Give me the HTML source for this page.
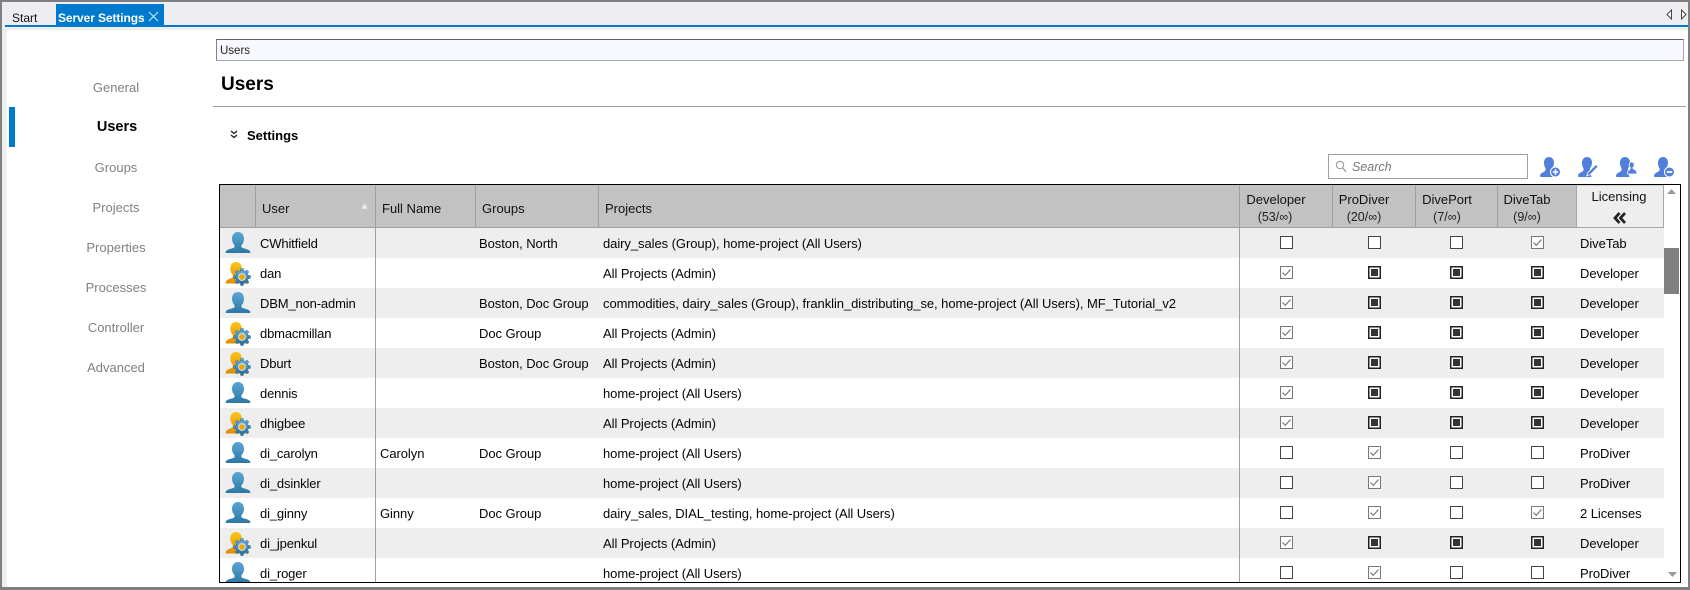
<!DOCTYPE html>
<html><head><meta charset="utf-8"><title>Server Settings</title>
<style>
html,body{margin:0;padding:0;width:1690px;height:590px;overflow:hidden;background:#fff}
body{position:relative;font-family:"Liberation Sans",sans-serif;font-size:13px;color:#111}
div,span,svg{position:absolute;display:block}
.t{white-space:nowrap;line-height:16px}
.n{color:#808080;width:120px;left:56px;text-align:center;font-size:13px;line-height:16px}
.h{top:201px;white-space:nowrap;line-height:16px;color:#111;font-size:13px}
.hc{text-align:center;width:90px;line-height:16px;white-space:nowrap;color:#111;font-size:13px}
.hs{color:#222;font-size:12.5px}
.v{top:185px;width:1px;height:42px;background:#a0a0a0}
.r{left:0;width:1444px;height:30px}
.r.o{background:#eee}
.r div{top:8px;line-height:16px;white-space:nowrap;color:#050505;letter-spacing:-.06px}
.r>svg{top:0;left:3px}
.r .a{left:40px;letter-spacing:-.15px}.b{left:160px}.g{left:259px}.p{left:383px}.l{left:1360px}
.r .c{top:8px;width:13px;height:13px;box-sizing:border-box;border:1px solid #444;background:#fff}
.r .k{border-color:#777}
.r .f{border:1px solid #222;background:#fff;box-shadow:inset 0 0 0 .5px #222}
.f:after{content:"";position:absolute;left:2px;top:2px;width:7px;height:7px;background:#333}
.d{left:1060px}.e{left:1148px}.s{left:1230px}.w{left:1311px}
.c svg{left:-1px;top:-1px}
</style></head><body>
<svg width="0" height="0" style="left:0;top:0">
<defs>
<linearGradient id="gb" x1="0" y1="0" x2="0" y2="1"><stop offset="0" stop-color="#5ca6d6"/><stop offset="1" stop-color="#2a78a3"/></linearGradient>
<linearGradient id="gy" x1="0" y1="0" x2="0" y2="1"><stop offset="0" stop-color="#fdc31a"/><stop offset="1" stop-color="#e08c00"/></linearGradient>
<linearGradient id="gg" x1="0" y1="0" x2="0" y2="1"><stop offset="0" stop-color="#6fb0dc"/><stop offset="1" stop-color="#2a6f9e"/></linearGradient>
<symbol id="ub" viewBox="0 0 30 30"><path fill="url(#gb)" d="M15 4c3.900 0 6 3 6 6.800 0 2.800-1 4.900-2.500 6.300v1.900c0 1.500 7.500 1.800 8.500 4.300.3.800.3 1.200.3 1.200v.5H2.700v-.5s0-.4.3-1.200c1-2.500 8.500-2.800 8.500-4.300v-1.900C10 15.700 9 13.600 9 10.800 9 7 11.100 4 15 4z"/></symbol>
<symbol id="ua" viewBox="0 0 30 30"><path fill="url(#gy)" d="M13 4c3.700 0 5.800 3 5.800 6.600 0 2.800-1 4.800-2.500 6.200v2.100c0 1.500 8 2 9 4.500.4 1 .4 2.100 .4 2.100H2.700v-.6s0-.6.300-1.500c1-2.500 6.800-3 6.800-4.500v-2.100c-1.500-1.400-2.500-3.400-2.500-6.200C7.300 7 9.300 4 13 4z"/><g fill="url(#gg)" stroke="#2b6f9c" stroke-width=".5"><circle cx="19" cy="19" r="6.300"/><path d="M17.700 10.500h2.600l.4 2.200h-3.400zM17.700 27.500h2.600l.4-2.200h-3.400zM10.500 17.700v2.600l2.200.4v-3.400zM27.500 17.700v2.600l-2.200.4v-3.400zM12.100 14l1.800-1.800 1.900 1.300-2.400 2.400zM25.900 24l-1.800 1.800-1.900-1.300 2.400-2.400zM14 25.900 12.200 24.100l1.300-1.900 2.400 2.400zM24 12.100l1.800 1.800-1.300 1.900-2.400-2.400z"/></g><circle cx="19" cy="19" r="3.400" fill="#f0a800" stroke="#cfe6f5"/></symbol>
<symbol id="ck" viewBox="0 0 13 13"><path fill="none" stroke="#777" stroke-width="1.200" d="M2.500 6.500 5.300 9.300 10.500 3.500"/></symbol>
<symbol id="per" viewBox="0 0 20 20"><path fill="#5080dc" d="M9 0c3.200 0 5 2.600 5 5.800 0 2.300-.9 4.200-2 5.400v1.600c0 .9.800 1.400 1.800 1.800-.5.900-.8 1.900-.8 3 0 .9.200 1.700.5 2.400H.5C-.2 19 0 18 .5 17.300c1.300-2 5-2.500 5-4.300v-1.800C4.500 10 4 8.100 4 5.800 4 2.600 5.800 0 9 0z"/></symbol>
</defs></svg>

<!-- window frame -->
<div style="left:0;top:0;width:1690px;height:2px;background:#808080"></div>
<div style="left:0;top:0;width:2px;height:590px;background:#808080"></div>
<div style="left:1688px;top:0;width:2px;height:590px;background:#808080"></div>
<div style="left:0;top:587px;width:1690px;height:3px;background:#808080"></div>
<div style="left:2px;top:2px;width:1686px;height:23px;background:#eeeef2"></div>
<div style="left:2px;top:25px;width:5px;height:562px;background:#eef0f0"></div>
<div style="left:2px;top:27px;width:1686px;height:3px;background:#eef0f0"></div>
<div style="left:5px;top:25px;width:1683px;height:2px;background:#007acc"></div>

<!-- tabs -->
<div class="t" style="left:12px;top:10px;font-size:12px;color:#111">Start</div>
<div style="left:56px;top:4px;width:108px;height:21px;background:#007acc"></div>
<div class="t" style="left:58px;top:10px;font-size:12px;font-weight:bold;color:#fff;letter-spacing:-.1px">Server Settings</div>
<svg style="left:148px;top:11px" width="11" height="11" viewBox="0 0 11 11"><path d="M1 1l9 9M10 1l-9 9" stroke="#cfe6f7" stroke-width="1.100" fill="none"/></svg>
<svg style="left:1666px;top:8px" width="7" height="13" viewBox="0 0 7 13"><path d="M5.500 2v9L1 6.500z" fill="#fff" stroke="#444"/></svg>
<svg style="left:1680px;top:8px" width="7" height="13" viewBox="0 0 7 13"><path d="M1.500 2v9L6 6.500z" fill="#fff" stroke="#444"/></svg>

<!-- left nav -->
<div class="n" style="top:80px">General</div>
<div class="n" style="top:119px;color:#000;font-weight:bold;font-size:14.500px;left:57px">Users</div>
<div class="n" style="top:160px">Groups</div>
<div class="n" style="top:200px">Projects</div>
<div class="n" style="top:240px">Properties</div>
<div class="n" style="top:280px">Processes</div>
<div class="n" style="top:320px">Controller</div>
<div class="n" style="top:360px">Advanced</div>
<div style="left:9px;top:107px;width:6px;height:40px;background:#007acc"></div>

<!-- address bar -->
<div style="left:216px;top:39px;width:1468px;height:22px;box-sizing:border-box;background:#f8f9ff;border:1px solid #a0aab4;border-top-color:#606468;border-left-color:#808488"></div>
<div class="t" style="left:220px;top:43px;font-size:11.500px;color:#222">Users</div>

<!-- heading -->
<div class="t" style="left:221px;top:73px;font-size:19px;line-height:24px;font-weight:bold;color:#000">Users</div>
<div style="left:213px;top:106px;width:1473px;height:1px;background:#a0a0a0"></div>
<svg style="left:230px;top:130px" width="8" height="9" viewBox="0 0 8 9"><path d="M1 1l3 2.500L7 1M1 5l3 2.500L7 5" stroke="#222" stroke-width="1.400" fill="none"/></svg>
<div class="t" style="left:247px;top:128px;font-weight:bold;color:#000;font-size:13px">Settings</div>

<!-- search + action icons -->
<div style="left:1328px;top:154px;width:200px;height:25px;box-sizing:border-box;border:1px solid #a0a0a0;background:#fff"></div>
<svg style="left:1335px;top:160px" width="12" height="13" viewBox="0 0 12 13"><circle cx="5" cy="5" r="3.700" fill="none" stroke="#999" stroke-width="1.100"/><path d="M7.800 8l3.200 3.800" stroke="#999" stroke-width="1.300"/></svg>
<div class="t" style="left:1352px;top:159px;font-style:italic;color:#777;font-size:12.500px">Search</div>

<svg style="left:1540px;top:157px" width="20" height="20"><use href="#per"/></svg>
<svg style="left:1540px;top:157px" width="21" height="21" viewBox="0 0 21 21"><circle cx="15.500" cy="15" r="5" fill="#5080dc" stroke="#fff"/><path d="M15.500 12.300v5.400M12.800 15h5.400" stroke="#fff" stroke-width="1.600"/></svg>

<svg style="left:1578px;top:157px" width="20" height="20"><use href="#per"/></svg>
<svg style="left:1578px;top:157px" width="21" height="21" viewBox="0 0 21 21"><path d="M18 7.500l2.200 2.200-8 8-3.500 1.200 1.200-3.400z" fill="#5080dc" stroke="#fff" stroke-width=".8"/></svg>

<svg style="left:1616px;top:157px" width="20" height="20"><use href="#per"/></svg>
<svg style="left:1616px;top:157px" width="21" height="21" viewBox="0 0 21 21"><path fill="#5080dc" stroke="#fff" stroke-width=".8" d="M15.500 5c1.700 0 2.700 1.300 2.700 3 0 1.100-.5 2-1.200 2.500v.9c0 .9 3.300 1.100 3.700 3.100l.1 2.500h-9.300c.2-1.800-.6-2.700 1.300-3.700.8-.6 1.500-.9 1.500-2v-.8c-.7-.5-1.200-1.400-1.200-2.500 0-1.700 .8-3 2.400-3z"/></svg>

<svg style="left:1654px;top:157px" width="20" height="20"><use href="#per"/></svg>
<svg style="left:1654px;top:157px" width="21" height="21" viewBox="0 0 21 21"><circle cx="15.500" cy="15" r="5" fill="#5080dc" stroke="#fff"/><path d="M12.800 15h5.400" stroke="#fff" stroke-width="1.800"/></svg>

<!-- table -->
<div style="left:219px;top:184px;width:1462px;height:399px;box-sizing:border-box;border:1px solid #000;background:#fff"></div>
<div style="left:220px;top:185px;width:1356px;height:42px;background:#c2c2c2"></div>
<div style="left:220px;top:227px;width:1444px;height:1px;background:#a0a0a0"></div>
<div class="v" style="left:255px"></div>
<div class="v" style="left:375px"></div>
<div class="v" style="left:475px"></div>
<div class="v" style="left:598px"></div>
<div class="v" style="left:1239px"></div>
<div class="v" style="left:1332px"></div>
<div class="v" style="left:1415px"></div>
<div class="v" style="left:1497px"></div>
<div style="left:1576px;top:185px;width:88px;height:43px;box-sizing:border-box;background:#eee;border:1px solid #a8a8a8;border-top-color:#d0d0d0"></div>

<div class="h" style="left:262px">User</div>
<svg style="left:360px;top:202px" width="9" height="8" viewBox="0 0 9 8"><path d="M4.500 1L8 7H1z" fill="#eee" stroke="#ccc" stroke-width=".8"/></svg>
<div class="h" style="left:382px">Full Name</div>
<div class="h" style="left:482px">Groups</div>
<div class="h" style="left:605px">Projects</div>
<div class="hc" style="left:1231px;top:192px">Developer</div><div class="hc hs" style="left:1230px;top:209px">(53/∞)</div>
<div class="hc" style="left:1319px;top:192px">ProDiver</div><div class="hc hs" style="left:1319px;top:209px">(20/∞)</div>
<div class="hc" style="left:1402px;top:192px">DivePort</div><div class="hc hs" style="left:1402px;top:209px">(7/∞)</div>
<div class="hc" style="left:1482px;top:192px">DiveTab</div><div class="hc hs" style="left:1482px;top:209px">(9/∞)</div>
<div class="hc" style="left:1574px;top:189px">Licensing</div>
<svg style="left:1613px;top:212px" width="14" height="12" viewBox="0 0 14 12"><path d="M6.500 1L2 6l4.500 5M12 1L7.500 6l4.500 5" stroke="#222" stroke-width="2.800" fill="none"/></svg>

<!-- scrollbar -->
<svg style="left:1666px;top:188px" width="11" height="7" viewBox="0 0 11 7"><path d="M5.500 1L10 6H1z" fill="#999"/></svg>
<div style="left:1664px;top:248px;width:15px;height:46px;background:#808080"></div>
<svg style="left:1667px;top:571px" width="11" height="7" viewBox="0 0 11 7"><path d="M5.500 6L10 1H1z" fill="#999"/></svg>

<!-- rows -->
<div style="left:220px;top:228px;width:1444px;height:354px;overflow:hidden">

<div class="r o" style="top:0"><svg width="30" height="30"><use href="#ub"/></svg><div class="a">CWhitfield</div><div class="g">Boston, North</div><div class="p">dairy_sales (Group), home-project (All Users)</div><div class="c d"></div><div class="c e"></div><div class="c s"></div><div class="c k w"><svg width="13" height="13"><use href="#ck"/></svg></div><div class="l">DiveTab</div></div>

<div class="r" style="top:30px"><svg width="30" height="30"><use href="#ua"/></svg><div class="a">dan</div><div class="p">All Projects (Admin)</div><div class="c k d"><svg width="13" height="13"><use href="#ck"/></svg></div><div class="c f e"></div><div class="c f s"></div><div class="c f w"></div><div class="l">Developer</div></div>

<div class="r o" style="top:60px"><svg width="30" height="30"><use href="#ub"/></svg><div class="a">DBM_non-admin</div><div class="g">Boston, Doc Group</div><div class="p">commodities, dairy_sales (Group), franklin_distributing_se, home-project (All Users), MF_Tutorial_v2</div><div class="c k d"><svg width="13" height="13"><use href="#ck"/></svg></div><div class="c f e"></div><div class="c f s"></div><div class="c f w"></div><div class="l">Developer</div></div>

<div class="r" style="top:90px"><svg width="30" height="30"><use href="#ua"/></svg><div class="a">dbmacmillan</div><div class="g">Doc Group</div><div class="p">All Projects (Admin)</div><div class="c k d"><svg width="13" height="13"><use href="#ck"/></svg></div><div class="c f e"></div><div class="c f s"></div><div class="c f w"></div><div class="l">Developer</div></div>

<div class="r o" style="top:120px"><svg width="30" height="30"><use href="#ua"/></svg><div class="a">Dburt</div><div class="g">Boston, Doc Group</div><div class="p">All Projects (Admin)</div><div class="c k d"><svg width="13" height="13"><use href="#ck"/></svg></div><div class="c f e"></div><div class="c f s"></div><div class="c f w"></div><div class="l">Developer</div></div>

<div class="r" style="top:150px"><svg width="30" height="30"><use href="#ub"/></svg><div class="a">dennis</div><div class="p">home-project (All Users)</div><div class="c k d"><svg width="13" height="13"><use href="#ck"/></svg></div><div class="c f e"></div><div class="c f s"></div><div class="c f w"></div><div class="l">Developer</div></div>

<div class="r o" style="top:180px"><svg width="30" height="30"><use href="#ua"/></svg><div class="a">dhigbee</div><div class="p">All Projects (Admin)</div><div class="c k d"><svg width="13" height="13"><use href="#ck"/></svg></div><div class="c f e"></div><div class="c f s"></div><div class="c f w"></div><div class="l">Developer</div></div>

<div class="r" style="top:210px"><svg width="30" height="30"><use href="#ub"/></svg><div class="a">di_carolyn</div><div class="b">Carolyn</div><div class="g">Doc Group</div><div class="p">home-project (All Users)</div><div class="c d"></div><div class="c k e"><svg width="13" height="13"><use href="#ck"/></svg></div><div class="c s"></div><div class="c w"></div><div class="l">ProDiver</div></div>

<div class="r o" style="top:240px"><svg width="30" height="30"><use href="#ub"/></svg><div class="a">di_dsinkler</div><div class="p">home-project (All Users)</div><div class="c d"></div><div class="c k e"><svg width="13" height="13"><use href="#ck"/></svg></div><div class="c s"></div><div class="c w"></div><div class="l">ProDiver</div></div>

<div class="r" style="top:270px"><svg width="30" height="30"><use href="#ub"/></svg><div class="a">di_ginny</div><div class="b">Ginny</div><div class="g">Doc Group</div><div class="p">dairy_sales, DIAL_testing, home-project (All Users)</div><div class="c d"></div><div class="c k e"><svg width="13" height="13"><use href="#ck"/></svg></div><div class="c s"></div><div class="c k w"><svg width="13" height="13"><use href="#ck"/></svg></div><div class="l">2 Licenses</div></div>

<div class="r o" style="top:300px"><svg width="30" height="30"><use href="#ua"/></svg><div class="a">di_jpenkul</div><div class="p">All Projects (Admin)</div><div class="c k d"><svg width="13" height="13"><use href="#ck"/></svg></div><div class="c f e"></div><div class="c f s"></div><div class="c f w"></div><div class="l">Developer</div></div>

<div class="r" style="top:330px"><svg width="30" height="30"><use href="#ub"/></svg><div class="a">di_roger</div><div class="p">home-project (All Users)</div><div class="c d"></div><div class="c k e"><svg width="13" height="13"><use href="#ck"/></svg></div><div class="c s"></div><div class="c w"></div><div class="l">ProDiver</div></div>

<div style="left:155px;top:0;width:1px;height:354px;background:#a0a0a0"></div>
<div style="left:1019px;top:0;width:1px;height:354px;background:#a0a0a0"></div>
</div>
</body></html>
